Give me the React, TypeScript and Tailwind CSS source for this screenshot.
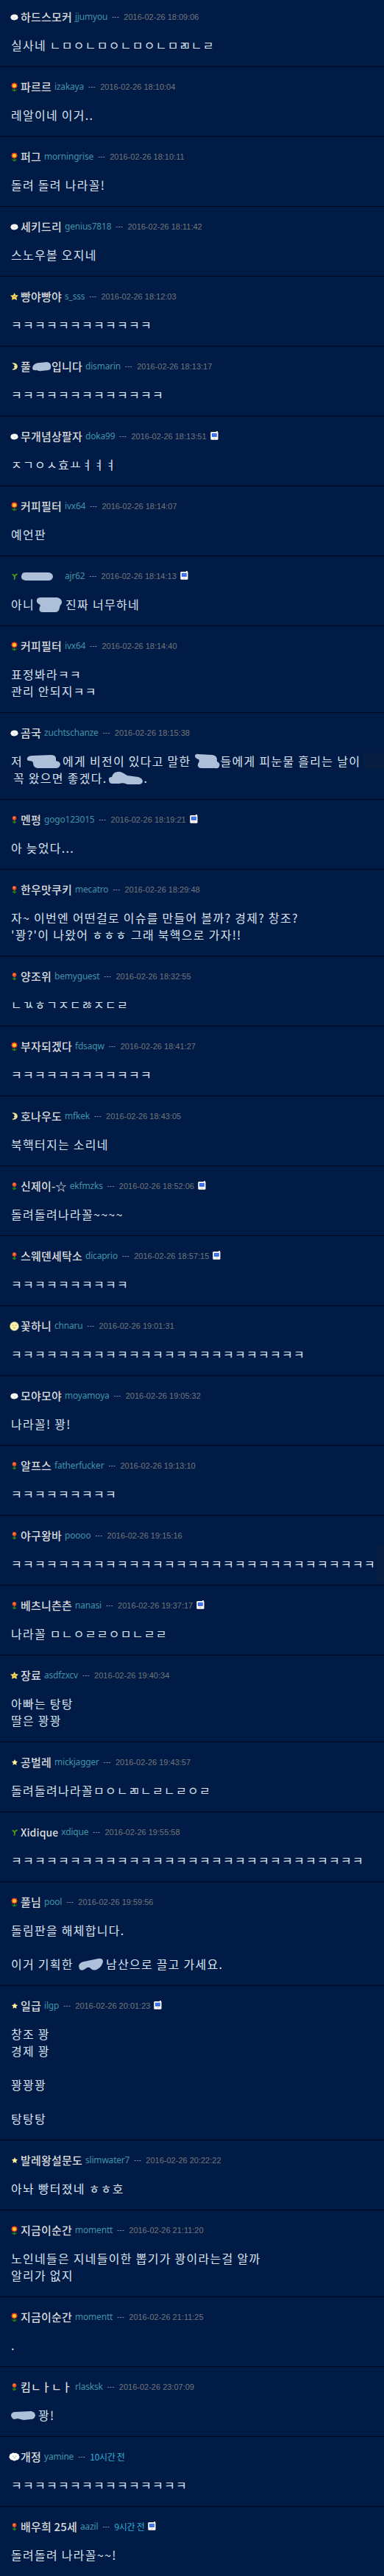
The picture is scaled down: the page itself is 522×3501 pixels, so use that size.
import type { ReactNode } from 'react';

type IconName = 'cloud' | 'bigCloud' | 'flower' | 'tulip' | 'sprout' | 'star' | 'smallStar' | 'moon' | 'fullMoon';

interface Comment {
  icon: IconName;
  nick: ReactNode;
  id: string;
  date: string;
  recent?: boolean;
  mobile?: boolean;
  lines: ReactNode[];
}

function Cloud({ big }: { big?: boolean }) {
  return (
    <svg className={big ? 'w-[15px] h-[12px]' : 'w-[11px] h-[9px]'} viewBox="0 0 15 12" preserveAspectRatio="none">
      <path d="M4 1.5Q5.5 0 7.5 1Q10 0 11.3 1.8Q14 2 13.8 4.5Q15.5 6.5 13.6 8.4Q12.5 10.8 10 10.4Q7.5 12.3 5.2 10.5Q2.2 10.8 1.6 8.5Q-.5 6.8 1 4.8Q1 2 4 1.5Z" fill="#fff" />
      <path d="M5 5.3h1.3M8.8 5.3h1.3M6.6 7.6h1.8" stroke="#8a8a9c" strokeWidth="1" />
    </svg>
  );
}

function Flower() {
  return (
    <svg className="w-[9px] h-[13px]" viewBox="0 0 9 13">
      <path d="M4.5 8v4" stroke="#2d8a16" strokeWidth="1.2" />
      <path d="M1 9.3Q3 9 4.5 11Q6 9 8 9.3Q7.5 12 4.5 12.4Q1.5 12 1 9.3Z" fill="#2b7c14" />
      <path d="M1.2 1.2L3 1L4.5.2L6 1L7.8 1.2L8 3L8.9 4.5L8 6L7.6 7.6L6 7.8L4.5 8.6L3 7.8L1.4 7.6L1 6L.1 4.5L1 3Z" fill="#e5381c" />
      <circle cx="4.5" cy="4.4" r="2.7" fill="#ff9d1e" />
      <circle cx="4.5" cy="4.4" r="1.6" fill="#ffe23a" />
      <circle cx="4.5" cy="4.4" r=".6" fill="#f58a1c" />
    </svg>
  );
}

function Tulip() {
  return (
    <svg className="w-[7px] h-[11px]" viewBox="0 0 7 11">
      <path d="M3.5 5v5" stroke="#2d8a16" strokeWidth="1.2" />
      <path d="M.7 7.2Q2.5 7 3.5 8.6Q4.5 7 6.3 7.2Q6 9.8 3.5 10.2Q1 9.8 .7 7.2Z" fill="#2b7c14" />
      <circle cx="3.5" cy="2.9" r="2.8" fill="#e2471f" />
      <circle cx="3.3" cy="2.4" r="1.3" fill="#ff8950" />
    </svg>
  );
}

function Sprout() {
  return (
    <svg className="w-[8px] h-[9px]" viewBox="0 0 8 9" fill="none" stroke="#4f9e1b" strokeWidth="1.7">
      <path d="M3.2 8.6Q4.4 6.5 3.8 4.2M3.8 5Q3 2 .7 1.6M3.8 4.6Q5 1.8 7.6 1.2" />
    </svg>
  );
}

function Star({ small }: { small?: boolean }) {
  return (
    <svg className={small ? 'w-[8px] h-[8px]' : 'w-[11px] h-[10px]'} viewBox="0 0 11 10" preserveAspectRatio="none">
      <path
        d="M5.6 0L7.2 3.1L11 3.6L8.3 6.1L9 10L5.5 8.2L2 9.8L2.6 6.2L0 3.6L3.9 3.2Z"
        fill={small ? '#fff29a' : '#f8d860'}
      />
      {!small && <path d="M5 4v2.2M6.6 4v2.2" stroke="#9c7828" strokeWidth=".7" />}
    </svg>
  );
}

function Moon() {
  return (
    <svg className="w-[8px] h-[10px]" viewBox="0 0 8 10">
      <path d="M1 .2Q7.8 .2 7.8 5Q7.8 9.8 1 9.8Q.4 9.4 1 8.8Q4 8 3.9 6.2L2.6 5.5L3.8 4.5Q4 2 1 1.3Q.4 .6 1 .2Z" fill="#fff0a0" />
      <path d="M5 3.8h1M4.6 7h1" stroke="#8c7434" strokeWidth=".8" />
    </svg>
  );
}

function FullMoon() {
  return (
    <svg className="w-[13px] h-[13px]" viewBox="0 0 13 13">
      <circle cx="6.5" cy="6.5" r="6.4" fill="#8c8c8a" />
      <circle cx="6.5" cy="6.5" r="5.7" fill="#fff3ac" />
      <path d="M3.8 5.2h1.5M7.8 5.2h1.5M5.4 8.3Q6.5 9.4 7.6 8.3" stroke="#95783a" strokeWidth=".9" fill="none" />
    </svg>
  );
}

function MobileIcon() {
  return (
    <svg className="w-[11px] h-[12px] ml-[5px] mb-[3px]" viewBox="0 0 11 12">
      <path d="M8 0h2v2h-2z" fill="#e9e2d4" />
      <rect x=".3" y="1" width="10.2" height="10.8" rx="1.2" fill="#fffdf6" />
      <rect x="2" y="2.8" width="6.8" height="5" fill="#2c62ee" />
      <path d="M3 4.2h4.8v1.4H3z" fill="#5b86f6" />
      <path d="M4 9.7h3" stroke="#b9b6b0" strokeWidth=".8" />
    </svg>
  );
}

function LevelIcon({ name }: { name: IconName }) {
  switch (name) {
    case 'cloud': return <Cloud />;
    case 'bigCloud': return <Cloud big />;
    case 'flower': return <Flower />;
    case 'tulip': return <Tulip />;
    case 'sprout': return <Sprout />;
    case 'star': return <Star />;
    case 'smallStar': return <Star small />;
    case 'moon': return <Moon />;
    case 'fullMoon': return <FullMoon />;
  }
}

// brush stroke that hides a word
function Smudge({ className, box, d }: { className: string; box: string; d: string }) {
  return (
    <svg className={`shrink-0 ${className}`} viewBox={box}>
      <path d={d} fill="#aebfd9" />
    </svg>
  );
}

const k = (n: number) => 'ㅋ'.repeat(n);

const comments: Comment[] = [
  { icon: 'cloud', nick: '하드스모커', id: 'jjumyou', date: '2016-02-26 18:09:06', lines: ['실사네 ㄴㅁㅇㄴㅁㅇㄴㅁㅇㄴㅁㄻㄴㄹ'] },
  { icon: 'flower', nick: '파르르', id: 'izakaya', date: '2016-02-26 18:10:04', lines: ['레알이네 이거..'] },
  { icon: 'flower', nick: '퍼그', id: 'morningrise', date: '2016-02-26 18:10:11', lines: ['돌려 돌려 나라꼴!'] },
  { icon: 'cloud', nick: '세키드리', id: 'genius7818', date: '2016-02-26 18:11:42', lines: ['스노우볼 오지네'] },
  { icon: 'star', nick: '빵야빵야', id: 's_sss', date: '2016-02-26 18:12:03', lines: [k(12)] },
  {
    icon: 'moon',
    nick: (
      <>
        풀
        <Smudge className="w-[28px] h-[13px]" box="0 0 28 13" d="M3 5Q6 1 12 1L22 0Q27 1 27 5Q28 10 24 11L15 12Q11 13 8 11Q2 12 2 8Z" />
        입니다
      </>
    ),
    id: 'dismarin', date: '2016-02-26 18:13:17', lines: [k(13)],
  },
  { icon: 'cloud', nick: '무개념상팔자', id: 'doka99', date: '2016-02-26 18:13:51', mobile: true, lines: ['ㅈㄱㅇㅅ효ㅛㅕㅕㅕ'] },
  { icon: 'flower', nick: '커피필터', id: 'ivx64', date: '2016-02-26 18:14:07', lines: ['예언판'] },
  {
    icon: 'sprout',
    nick: <Smudge className="w-[56px] h-[14px]" box="0 0 56 14" d="M2 4Q3 2 6 2L38 2Q44 3 44 8Q43 13 38 13L7 13Q0 12 1 7Z" />,
    id: 'ajr62', date: '2016-02-26 18:14:13', mobile: true,
    lines: [
      <>
        아니
        <Smudge className="w-[42px] h-[22px]" box="0 0 42 22" d="M3 4Q4 1 8 1L31 1Q38 3 37 9Q34 12 34 15Q33 21 28 21L10 21Q5 20 7 14Q9 11 6 10Q2 8 3 4Z" />
        진짜 너무하네
      </>,
    ],
  },
  { icon: 'flower', nick: '커피필터', id: 'ivx64', date: '2016-02-26 18:14:40', lines: ['표정봐라ㅋㅋ', '관리 안되지ㅋㅋ'] },
  {
    icon: 'cloud', nick: '곰국', id: 'zuchtschanze', date: '2016-02-26 18:15:38',
    lines: [
      <>
        저
        <Smudge className="w-[54px] h-[20px]" box="0 0 54 20" d="M6 5Q8 2 13 2L38 1Q44 1 45 5L45 9Q51 10 51 14Q50 19 45 19L20 19Q14 18 14 12Q14 9 8 9Q5 8 6 5Z" />
        에게 비전이 있다고 말한
        <Smudge className="w-[40px] h-[21px]" box="0 0 40 21" d="M5 4Q5 0 10 1L29 2Q36 3 35 11Q40 13 38 18Q37 21 32 20L14 20Q8 20 9 14Q12 10 10 8Q6 7 5 4Z" />
        들에게 피눈물 흘리는 날이
      </>,
      <>
        <span className="w-[3px]" />
        꼭 왔으면 좋겠다.
        <Smudge className="w-[50px] h-[19px]" box="0 0 50 19" d="M3 12Q2 8 7 8Q9 1 15 1Q19 0 28 6L43 8Q49 10 49 14Q48 18 44 18L28 18Q23 15 17 17L8 17Q3 17 3 12Z" />
        .
      </>,
    ],
  },
  { icon: 'tulip', nick: '멘펑', id: 'gogo123015', date: '2016-02-26 18:19:21', mobile: true, lines: ['아 늦었다...'] },
  {
    icon: 'tulip', nick: '한우맛쿠키', id: 'mecatro', date: '2016-02-26 18:29:48',
    lines: ['자~ 이번엔 어떤걸로 이슈를 만들어 볼까? 경제? 창조?', "'꽝?'이 나왔어 ㅎㅎㅎ 그래 북핵으로 가자!!"],
  },
  { icon: 'tulip', nick: '양조위', id: 'bemyguest', date: '2016-02-26 18:32:55', lines: ['ㄴㄳㅎㄱㅈㄷㅀㅈㄷㄹ'] },
  { icon: 'flower', nick: '부자되겠다', id: 'fdsaqw', date: '2016-02-26 18:41:27', lines: [k(12)] },
  { icon: 'moon', nick: '호나우도', id: 'mfkek', date: '2016-02-26 18:43:05', lines: ['북핵터지는 소리네'] },
  { icon: 'tulip', nick: '신제이-☆', id: 'ekfmzks', date: '2016-02-26 18:52:06', mobile: true, lines: ['돌려돌려나라꼴~~~~'] },
  { icon: 'tulip', nick: '스웨덴세탁소', id: 'dicaprio', date: '2016-02-26 18:57:15', mobile: true, lines: [k(10)] },
  { icon: 'fullMoon', nick: '꽃하니', id: 'chnaru', date: '2016-02-26 19:01:31', lines: [k(25)] },
  { icon: 'cloud', nick: '모야모야', id: 'moyamoya', date: '2016-02-26 19:05:32', lines: ['나라꼴! 꽝!'] },
  { icon: 'tulip', nick: '알프스', id: 'fatherfucker', date: '2016-02-26 19:13:10', lines: [k(9)] },
  { icon: 'tulip', nick: '야구왕바', id: 'poooo', date: '2016-02-26 19:15:16', lines: [k(31)] },
  { icon: 'tulip', nick: '베츠니츤츤', id: 'nanasi', date: '2016-02-26 19:37:17', mobile: true, lines: ['나라꼴 ㅁㄴㅇㄹㄹㅇㅁㄴㄹㄹ'] },
  { icon: 'star', nick: '장료', id: 'asdfzxcv', date: '2016-02-26 19:40:34', lines: ['아빠는 탕탕', '딸은 꽝꽝'] },
  { icon: 'smallStar', nick: '공벌레', id: 'mickjagger', date: '2016-02-26 19:43:57', lines: ['돌려돌려나라꼴ㅁㅇㄴㄻㄴㄹㄴㄹㅇㄹ'] },
  { icon: 'sprout', nick: <span className="text-[14px] tracking-[0.1px]">Xidique</span>, id: 'xdique', date: '2016-02-26 19:55:58', lines: [k(30)] },
  {
    icon: 'flower', nick: '풀님', id: 'pool', date: '2016-02-26 19:59:56',
    lines: [
      '돌림판을 해체합니다.',
      '',
      <>
        이거 기획한
        <Smudge className="w-[44px] h-[18px]" box="0 0 44 18" d="M7 11Q8 6 14 5L33 1Q40 0 40 5Q39 11 33 15Q28 18 24 15Q21 11 17 14Q11 19 8 15Z" />
        남산으로 끌고 가세요.
      </>,
    ],
  },
  { icon: 'smallStar', nick: '일급', id: 'ilgp', date: '2016-02-26 20:01:23', mobile: true, lines: ['창조 꽝', '경제 꽝', '', '꽝꽝꽝', '', '탕탕탕'] },
  { icon: 'smallStar', nick: '발레왕설문도', id: 'slimwater7', date: '2016-02-26 20:22:22', lines: ['아놔 빵터졌네 ㅎㅎ호'] },
  { icon: 'flower', nick: '지금이순간', id: 'momentt', date: '2016-02-26 21:11:20', lines: ['노인네들은 지네들이한 뽑기가 꽝이라는걸 알까', '알리가 없지'] },
  { icon: 'flower', nick: '지금이순간', id: 'momentt', date: '2016-02-26 21:11:25', lines: ['.'] },
  {
    icon: 'tulip', nick: '킴ㄴㅏㄴㅏ', id: 'rlasksk', date: '2016-02-26 23:07:09',
    lines: [
      <>
        <Smudge className="w-[37px] h-[14px]" box="0 0 37 14" d="M0 6Q1 2 6 2L27 1Q33 2 33 7Q32 12 27 12L17 13L9 11L4 12Q0 10 0 6Z" />
        꽝!
      </>,
    ],
  },
  { icon: 'bigCloud', nick: '개정', id: 'yamine', date: '10시간 전', recent: true, lines: [k(15)] },
  { icon: 'tulip', nick: '배우희 25세', id: 'aazil', date: '9시간 전', recent: true, mobile: true, lines: ['돌려돌려 나라꼴~~!'] },
];

function CommentItem({ comment }: { comment: Comment }) {
  return (
    <article className="pt-[17px] pb-[17px] pl-3 first:pt-[13px] border-b border-[#00081f]">
      <div className="h-5 flex items-center whitespace-pre">
        <span className="w-[15px] mr-px shrink-0 flex justify-center">
          <LevelIcon name={comment.icon} />
        </span>
        <span className="flex items-center text-[15px] leading-5 font-medium tracking-[0.2px] text-[#dcdcde]">{comment.nick}</span>
        <span className="ml-[4px] font-['Noto_Sans'] text-[12px] leading-5 tracking-[-0.2px] text-[#4193a6]">{comment.id}</span>
        <span className="ml-[6px] font-['Liberation_Sans'] text-[8px] leading-5 tracking-[0.7px] text-[#c9d3e3]">---</span>
        {comment.recent ? (
          <span className="ml-[6px] text-[12px] leading-5 tracking-[-0.3px] text-[#35abd2]">{comment.date}</span>
        ) : (
          <span className="ml-[6px] font-['Liberation_Sans'] text-[11px] leading-5 text-[#74777b]">{comment.date}</span>
        )}
        {comment.mobile && <MobileIcon />}
      </div>

      <div className="mt-[17px] pl-[3px] text-[16px] tracking-[1.28px] text-[#dbe3f0]">
        {comment.lines.map((line, i) => (
          <div key={i} className="h-[23px] leading-[23px] flex items-center whitespace-pre">
            {line}
          </div>
        ))}
      </div>
    </article>
  );
}

export default function App() {
  return (
    <main className="relative w-[522px] h-[3501px] overflow-hidden bg-[#001b45] font-['Noto_Sans_CJK_KR',sans-serif]">
      {comments.map((comment, i) => (
        <CommentItem key={i} comment={comment} />
      ))}

      {/* faint patches over the page edge */}
      <div className="absolute left-[494px] top-[1023px] w-[28px] h-[22px] bg-[#081e41]" />
      <div className="absolute left-[15px] top-[1047px] w-[2px] h-[19px] bg-[#081e41]" />
      <div className="absolute left-[512px] top-[2101px] w-[10px] h-[49px] bg-[#081e41]" />
    </main>
  );
}
